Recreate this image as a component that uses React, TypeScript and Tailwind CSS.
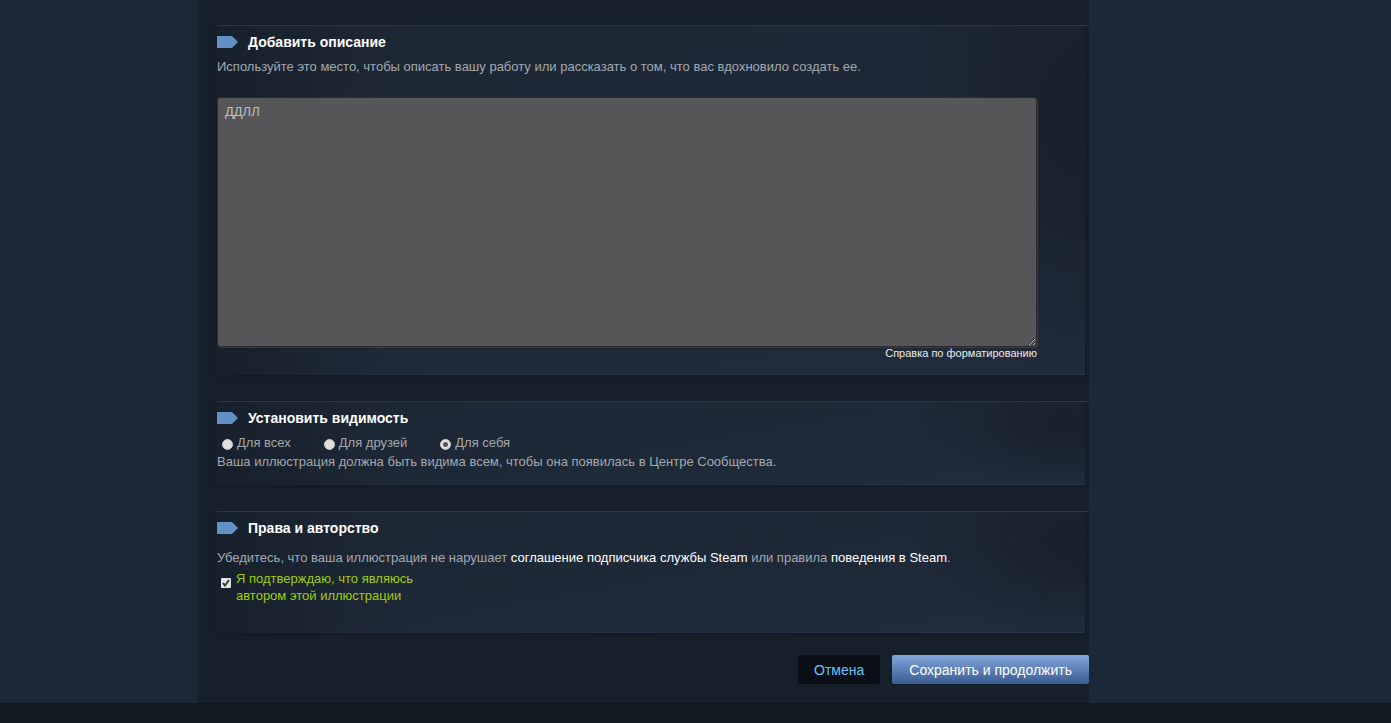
import { useState } from 'react';
import type { ReactNode } from 'react';

interface SectionProps {
  title: string;
  className: string;
  children: ReactNode;
}

const VISIBILITY = [
  { value: 'public', label: 'Для всех' },
  { value: 'friends', label: 'Для друзей' },
  { value: 'private', label: 'Для себя' },
];

function Section({ title, className, children }: SectionProps) {
  return (
    <section className="border-t border-[#2b3a50]">
      <div className="mr-1 bg-[radial-gradient(ellipse_20%_80%_at_100%_25%,#17212c_10%,transparent_100%),linear-gradient(90deg,#17212c_0%,transparent_22%),linear-gradient(170deg,#1d2835_0%,#1e2937_50%,#202c3c_100%)] shadow-[1px_2px_3px_#131c26]">
        <div className={className}>
          <h2 className="flex h-8 items-center gap-[10px] text-sm font-bold text-white">
            <svg width="21" height="12" viewBox="0 0 21 12" aria-hidden="true">
              <path d="M0 0h15l6 6-6 6H0z" fill="#6190c7" />
            </svg>
            {title}
          </h2>
          {children}
        </div>
        <div className="h-px bg-linear-to-r from-transparent to-[#283648]" />
      </div>
    </section>
  );
}

export default function App() {
  const [description, setDescription] = useState('ДДЛЛ');
  const [visibility, setVisibility] = useState('private');
  const [confirmed, setConfirmed] = useState(true);

  return (
    <div className="min-h-screen bg-[#111820] font-['Liberation_Sans',Arial,sans-serif] text-[13px] leading-[17px] text-[#a3a8ae]">
      <div className="bg-[#1b2838]">
        <div className="mx-auto max-w-[995px]">
          <form
            className="max-w-[891px] bg-[#16202b] pt-[25px] pb-[19px] pl-[19px]"
            onSubmit={(e) => e.preventDefault()}
          >
            <div className="flex flex-col gap-[26px]">
              <Section title="Добавить описание" className="pb-[14px]">
                <label htmlFor="description" className="block">
                  Используйте это место, чтобы описать вашу работу или рассказать о том, что вас вдохновило создать ее.
                </label>
                <textarea
                  id="description"
                  value={description}
                  onChange={(e) => setDescription(e.target.value)}
                  className="mt-[22px] block h-[250px] w-full max-w-[820px] resize rounded-[3px] border border-[#2c2c2e] bg-[#565658] px-[7px] py-[5px] text-[#bfbfbf] shadow-[1px_1px_0_#3a3a3c] outline-none"
                />
                <div className="max-w-[820px] text-right text-[11px] leading-[13px]">
                  <a href="#formatting" className="text-[#ebebeb] hover:text-[#66c0f4]">
                    Справка по форматированию
                  </a>
                </div>
              </Section>

              <Section title="Установить видимость" className="pb-[14px]">
                <div className="flex h-[19px] gap-[33px] pl-[5px]">
                  {VISIBILITY.map((v) => (
                    <label key={v.value} className="flex gap-1">
                      <input
                        type="radio"
                        name="visibility"
                        value={v.value}
                        checked={visibility === v.value}
                        onChange={() => setVisibility(v.value)}
                        className="mt-[5px] size-[11px] appearance-none rounded-full border border-[#c8c8c8] bg-[#e0e0e0] checked:bg-[radial-gradient(circle,#555_0,#555_2px,#e0e0e0_3px)]"
                      />
                      {v.label}
                    </label>
                  ))}
                </div>
                <p>Ваша иллюстрация должна быть видима всем, чтобы она появилась в Центре Сообщества.</p>
              </Section>

              <Section title="Права и авторство" className="pb-7">
                <p className="mt-[5px]">
                  Убедитесь, что ваша иллюстрация не нарушает{' '}
                  <a href="#agreement" className="text-white hover:text-[#66c0f4]">
                    соглашение подписчика службы Steam
                  </a>{' '}
                  или правила{' '}
                  <a href="#conduct" className="text-white hover:text-[#66c0f4]">
                    поведения в Steam
                  </a>
                  .
                </p>
                <label className="mt-1 flex w-fit gap-[5px] pl-1 text-[#a1cd0c]">
                  <span className="mt-2 grid size-[10px]">
                    <input
                      type="checkbox"
                      checked={confirmed}
                      onChange={(e) => setConfirmed(e.target.checked)}
                      className="col-start-1 row-start-1 size-[10px] appearance-none rounded-[1px] bg-[#e4e4e4]"
                    />
                    {confirmed && (
                      <svg
                        viewBox="0 0 10 10"
                        className="pointer-events-none col-start-1 row-start-1 size-[10px]"
                        aria-hidden="true"
                      >
                        <path d="M2 5l2 2.5L8 2" fill="none" stroke="#3c3c3c" strokeWidth="2" />
                      </svg>
                    )}
                  </span>
                  <span>
                    Я подтверждаю, что являюсь
                    <br />
                    автором этой иллюстрации
                  </span>
                </label>
              </Section>
            </div>

            <div className="mt-[22px] flex justify-end gap-3 text-sm">
              <button type="button" className="h-[29px] rounded-[2px] bg-[#0a0f15] px-4 text-[#67c1f5]">
                Отмена
              </button>
              <button
                type="submit"
                className="h-[29px] rounded-[2px] bg-linear-to-b from-[#84a7dc] to-[#385c92] px-[17px] text-white"
              >
                Сохранить и продолжить
              </button>
            </div>
          </form>
        </div>
      </div>
    </div>
  );
}
